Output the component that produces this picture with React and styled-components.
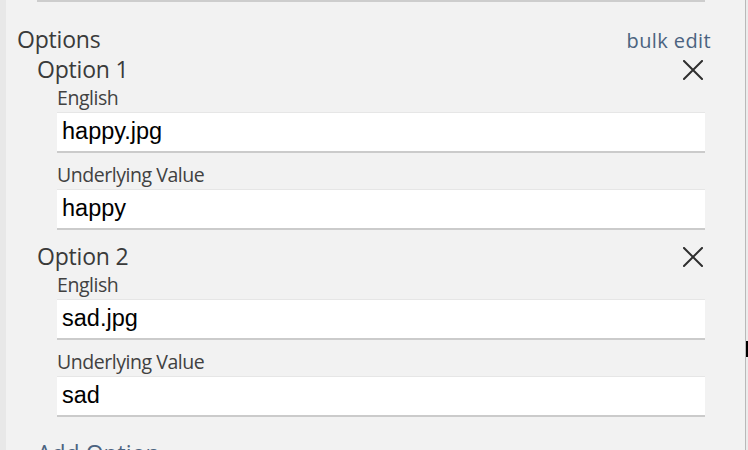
import React from "react";
import styled, { createGlobalStyle } from "styled-components";

const GlobalStyle = createGlobalStyle`
  html, body {
    margin: 0;
    padding: 0;
    background: #f2f2f2;
    overflow: hidden;
  }
`;

const options = [
  { id: 1, label: "happy.jpg", value: "happy" },
  { id: 2, label: "sad.jpg", value: "sad" },
];

function CloseIcon() {
  return (
    <svg width="20" height="20" viewBox="0 0 20 20">
      <path
        d="M1 1 L19 19 M19 1 L1 19"
        stroke="#2f2f2f"
        strokeWidth="2"
        strokeLinecap="square"
        fill="none"
      />
    </svg>
  );
}

function Field({ label, value }) {
  return (
    <FieldWrap>
      <Label>{label}</Label>
      <Input>{value}</Input>
    </FieldWrap>
  );
}

export default function App() {
  return (
    <>
      <GlobalStyle />
      <Frame>
        <Panel>
          <PrevField />
          <SectionHead>
            <SectionTitle>Options</SectionTitle>
            <BulkEdit>bulk edit</BulkEdit>
          </SectionHead>
          <OptionList>
            {options.map((o) => (
              <OptionBlock key={o.id}>
                <OptionHead>
                  <OptionTitle>Option {o.id}</OptionTitle>
                  <CloseBtn>
                    <CloseIcon />
                  </CloseBtn>
                </OptionHead>
                <Fields>
                  <Field label="English" value={o.label} />
                  <Field label="Underlying Value" value={o.value} />
                </Fields>
              </OptionBlock>
            ))}
          </OptionList>
          <AddOption>Add Option</AddOption>
        </Panel>
        <Scrollbar>
          <Marker />
        </Scrollbar>
      </Frame>
    </>
  );
}

const Frame = styled.div`
  display: flex;
  width: 748px;
  height: 450px;
  overflow: hidden;
  border-left: 6px solid #e8e8e8;
  box-sizing: border-box;
`;

const Panel = styled.div`
  flex: 1;
  display: flex;
  flex-direction: column;
  padding: 0 34px 0 11px;
  background: #f2f2f2;
  font-family: "Open Sans", "Noto Sans", sans-serif;
`;

const Scrollbar = styled.div`
  position: relative;
  width: 2px;
  border-left: 1px solid #b9b9b9;
  background: #ececec;
`;

const Marker = styled.div`
  position: absolute;
  left: 0;
  top: 341px;
  width: 3px;
  height: 16px;
  background: #000;
`;

const PrevField = styled.div`
  margin: 0 6px 0 20px;
  height: 1px;
  background: #fff;
  border-bottom: 2px solid #cdcdcd;
`;

const SectionHead = styled.div`
  display: flex;
  justify-content: space-between;
  align-items: baseline;
  margin-top: 22px;
  height: 31px;
`;

const SectionTitle = styled.div`
  font-size: 23px;
  line-height: 31px;
  color: #3a3a3a;
  letter-spacing: -0.2px;
`;

const BulkEdit = styled.a`
  font-size: 20px;
  line-height: 31px;
  color: #4b6380;
  letter-spacing: 0.4px;
  cursor: pointer;
`;

const OptionList = styled.div`
  display: flex;
  flex-direction: column;
  gap: 12px;
  padding-left: 20px;
`;

const OptionBlock = styled.div`
  display: flex;
  flex-direction: column;
`;

const OptionHead = styled.div`
  display: flex;
  justify-content: space-between;
  align-items: center;
  height: 29px;
  padding-right: 8px;
`;

const OptionTitle = styled.div`
  font-size: 23px;
  line-height: 29px;
  color: #3a3a3a;
  letter-spacing: -0.2px;
`;

const CloseBtn = styled.div`
  display: flex;
  width: 20px;
  height: 20px;
  cursor: pointer;
`;

const Fields = styled.div`
  display: flex;
  flex-direction: column;
  gap: 8px;
  padding: 0 6px 0 20px;
`;

const FieldWrap = styled.div`
  display: flex;
  flex-direction: column;
`;

const Label = styled.div`
  font-size: 19.5px;
  line-height: 28px;
  color: #414141;
  letter-spacing: -0.45px;
`;

const Input = styled.div`
  height: 38px;
  box-sizing: content-box;
  background: #fff;
  border-top: 1px solid #e6e6e6;
  border-bottom: 2px solid #cbcbcb;
  padding: 0 5px;
  font-family: "Liberation Sans", Arial, sans-serif;
  font-size: 23.5px;
  line-height: 37px;
  color: #000;
`;

const AddOption = styled.div`
  margin: 22px 0 0 20px;
  font-size: 23px;
  line-height: 29px;
  color: #4b6380;
`;
